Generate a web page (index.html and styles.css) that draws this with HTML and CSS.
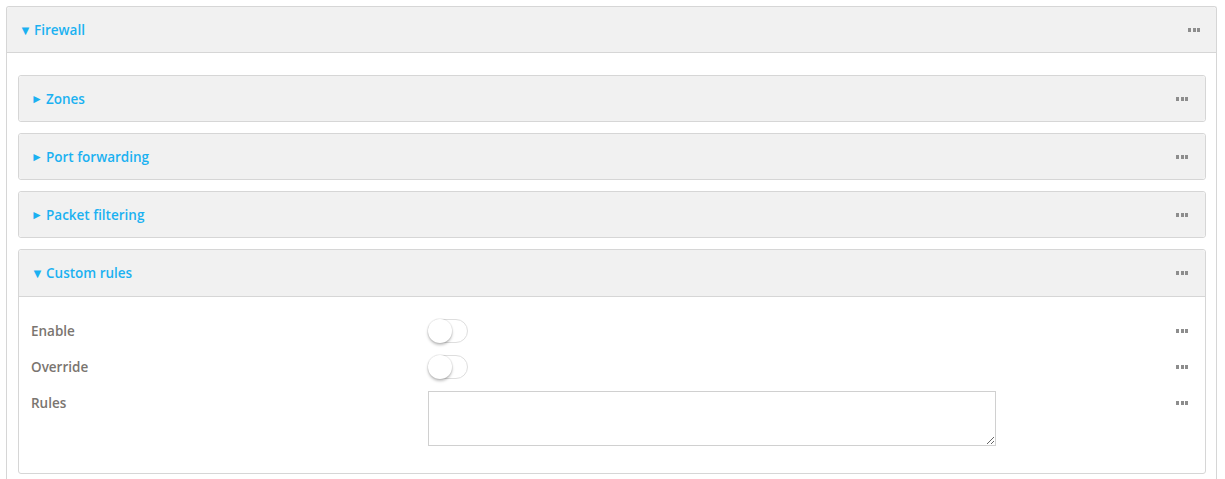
FILE: index.html
```html
<!DOCTYPE html>
<html>
<head>
<meta charset="utf-8">
<link rel="stylesheet" href="styles.css">
</head>
<body>
<div class="panel outer">
  <div class="phead outer-head">
    <span class="title"><span class="tri">&#9660;</span>Firewall</span>
    <span class="dots"><i></i><i></i><i></i></span>
  </div>
  <div class="pbody outer-body">
    <div class="panel inner">
      <div class="phead"><span class="title"><span class="tri sm">&#9658;</span>Zones</span><span class="dots"><i></i><i></i><i></i></span></div>
    </div>
    <div class="panel inner">
      <div class="phead"><span class="title"><span class="tri sm">&#9658;</span>Port forwarding</span><span class="dots"><i></i><i></i><i></i></span></div>
    </div>
    <div class="panel inner">
      <div class="phead"><span class="title"><span class="tri sm">&#9658;</span>Packet filtering</span><span class="dots"><i></i><i></i><i></i></span></div>
    </div>
    <div class="panel inner open">
      <div class="phead"><span class="title"><span class="tri">&#9660;</span>Custom rules</span><span class="dots"><i></i><i></i><i></i></span></div>
      <div class="pbody fields">
        <div class="row">
          <span class="label">Enable</span>
          <span class="toggle"><span class="knob"></span></span>
          <span class="dots"><i></i><i></i><i></i></span>
        </div>
        <div class="row">
          <span class="label">Override</span>
          <span class="toggle"><span class="knob"></span></span>
          <span class="dots"><i></i><i></i><i></i></span>
        </div>
        <div class="row rules">
          <span class="label">Rules</span>
          <textarea class="ta"></textarea>
          <span class="dots"><i></i><i></i><i></i></span>
        </div>
      </div>
    </div>
  </div>
</div>
</body>
</html>
```

FILE: styles.css
```css
html, body { margin: 0; padding: 0; background: #fff; }
body {
  padding: 6px 8px 0 6px;
  font-family: "Open Sans", "Liberation Sans", sans-serif;
  font-size: 13.5px;
  height: 479px;
  box-sizing: border-box;
  overflow: hidden;
}
.panel {
  border: 1px solid #d6d6d6;
  border-radius: 3px;
  background: #fff;
}
.outer { border-bottom: none; border-radius: 3px 3px 0 0; height: 473px; box-sizing: border-box; overflow: hidden; }
.phead {
  display: flex;
  align-items: center;
  justify-content: space-between;
  height: 45px;
  background: #f1f1f1;
  padding: 0 16px 0 12px;
  border-radius: 3px 3px 0 0;
}
.outer-head { border-bottom: 1px solid #d6d6d6; }
.inner .phead { border-radius: 3px; padding-right: 17px; }
.inner.open .phead { border-bottom: 1px solid #d6d6d6; border-radius: 3px 3px 0 0; height: 46px; }
.title {
  color: #1bb1f1;
  font-weight: 600;
  display: flex;
  align-items: center;
}
.tri { font-size: 13px; margin-right: 4px; width: 11px; display: inline-block; }
.tri.sm { font-size: 12px; }
.dots { display: flex; gap: 1.5px; }
.dots i { width: 3px; height: 4px; background: #8d8d8d; display: block; }
.outer-body { padding: 22px 10px 0 11px; display: flex; flex-direction: column; gap: 11px; }
.fields { padding: 22px 17px 27px 12px; display: flex; flex-direction: column; gap: 13px; }
.row { display: flex; align-items: center; height: 23px; }
.row .label { width: 397px; color: #7a7570; font-weight: 600; }
.row .dots { margin-left: auto; }
.toggle {
  width: 38px; height: 22px;
  border: 1px solid #dedede;
  border-radius: 12px;
  position: relative;
  background: #fff;
}
.knob {
  position: absolute; left: -1px; top: -1px;
  width: 24px; height: 24px; border-radius: 50%;
  background: #fff;
  box-shadow: 0 2px 3px rgba(0,0,0,0.25), 0 0 0 1px rgba(0,0,0,0.05);
}
.row.rules { align-items: flex-start; height: auto; }
.row.rules .label { margin-top: 3px; }
.row.rules .dots { margin-top: 10px; }
.ta {
  width: 568px; height: 55px;
  border: 1px solid #d0d0d0;
  box-sizing: border-box;
  margin: 0;
  font: inherit;
  resize: both;
}
```
